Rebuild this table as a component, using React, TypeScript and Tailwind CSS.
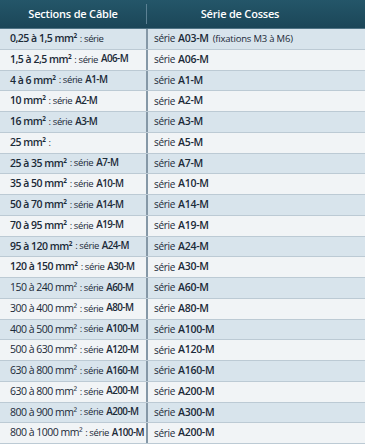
import React from "react";

type Row = { left: [string, boolean, string | null]; right: string; extra?: string };

// left: [number part, show "série", code]
const rows: Row[] = [
  { left: ["0,25 à 1,5", true, null], right: "A03-M", extra: "(fixations M3 à M6)" },
  { left: ["1,5 à 2,5", true, "A06-M"], right: "A06-M" },
  { left: ["4 à 6", true, "A1-M"], right: "A1-M" },
  { left: ["10", true, "A2-M"], right: "A2-M" },
  { left: ["16", true, "A3-M"], right: "A3-M" },
  { left: ["25", false, null], right: "A5-M" },
  { left: ["25 à 35", true, "A7-M"], right: "A7-M" },
  { left: ["35 à 50", true, "A10-M"], right: "A10-M" },
  { left: ["50 à 70", true, "A14-M"], right: "A14-M" },
  { left: ["70 à 95", true, "A19-M"], right: "A19-M" },
  { left: ["95 à 120", true, "A24-M"], right: "A24-M" },
  { left: ["120 à 150", true, "A30-M"], right: "A30-M" },
  { left: ["150 à 240", true, "A60-M"], right: "A60-M" },
  { left: ["300 à 400", true, "A80-M"], right: "A80-M" },
  { left: ["400 à 500", true, "A100-M"], right: "A100-M" },
  { left: ["500 à 630", true, "A120-M"], right: "A120-M" },
  { left: ["630 à 800", true, "A160-M"], right: "A160-M" },
  { left: ["630 à 800", true, "A200-M"], right: "A200-M" },
  { left: ["800 à 900", true, "A200-M"], right: "A300-M" },
  { left: ["800 à 1000", true, "A100-M"], right: "A200-M" },
];

export default function App() {
  return (
    <div className="w-[365px] h-[444px] flex flex-col bg-[#eef2f5] text-[#1b2a38] font-['Open_Sans','Noto_Sans',sans-serif] overflow-hidden">
      <div className="h-[29px] flex shrink-0 bg-gradient-to-b from-[#245669] to-[#1b4658] text-white font-semibold text-[11px] tracking-[-0.2px] border-b border-[#4f7385]">
        <div className="w-[146px] flex items-center justify-center">Sections de Câble</div>
        <div className="w-px my-[4px] bg-[#5c8194]" />
        <div className="flex-1 flex items-center justify-center pr-[32px]">Série de Cosses</div>
      </div>
      <div className="flex-1 flex flex-col">
        {rows.map((r, i) => (
          <div
            key={i}
            className={`flex-1 flex border-b border-[#bccad4] ${i % 2 === 0 ? "bg-[#d8e4ec]" : "bg-[#f1f4f6]"}`}
          >
            <div className="w-[148px] pl-[10px] flex items-center whitespace-nowrap border-r-2 border-[#8598a7]">
              <span className={`${i < 12 ? "font-semibold" : "font-medium"} text-[10.5px] tracking-[-0.5px]`}>{r.left[0]} mm²</span>
              <span className="text-[9.5px] ml-[3px] tracking-[-0.4px]">:{r.left[1] ? " série" : ""}</span>
              {r.left[2] && <span className="font-semibold text-[9.8px] ml-[3px] tracking-[-0.55px]">{r.left[2]}</span>}
            </div>
            <div className="flex-1 pl-[6px] flex items-center whitespace-nowrap">
              <span className="text-[10px] tracking-[-0.3px]">série</span>
              <span className="font-semibold text-[10.5px] ml-[3px] tracking-[-0.3px]">{r.right}</span>
              {r.extra && <span className="text-[9.5px] ml-[4px] tracking-[-0.2px]">{r.extra}</span>}
            </div>
          </div>
        ))}
      </div>
    </div>
  );
}
